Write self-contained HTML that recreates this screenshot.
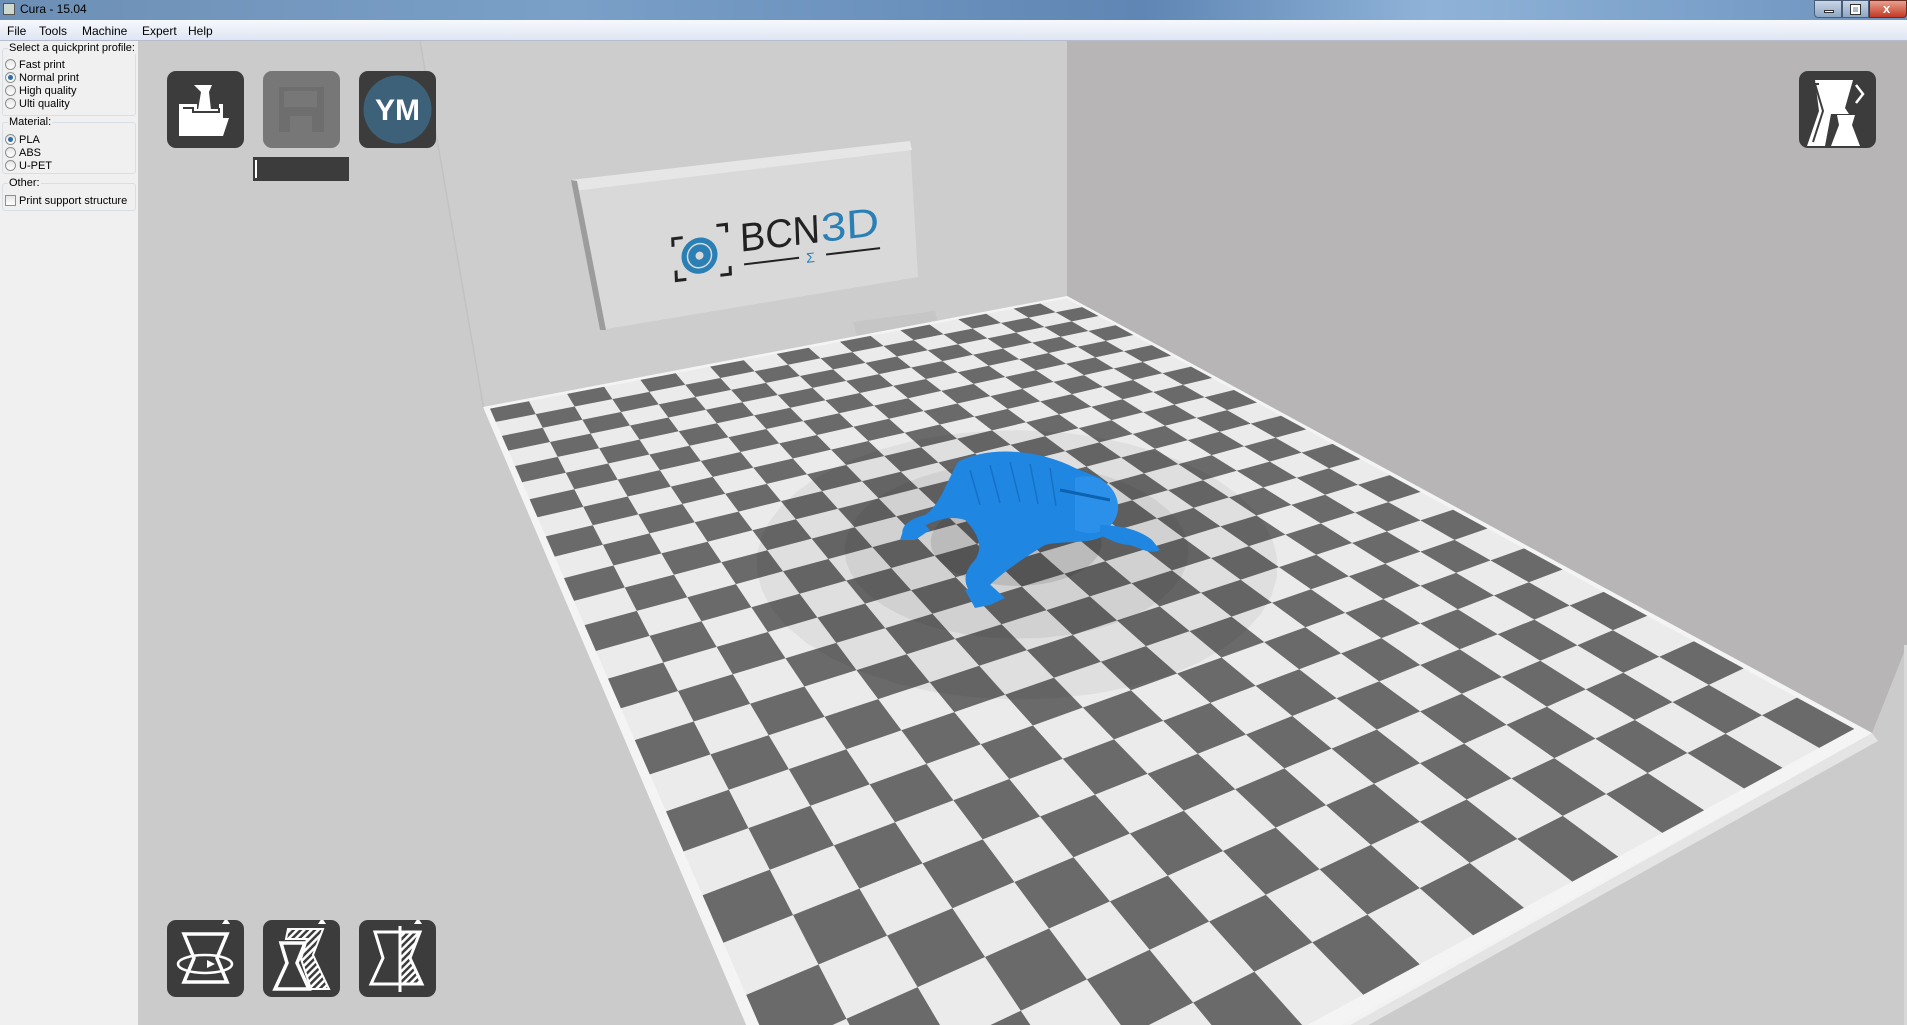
<!DOCTYPE html>
<html><head><meta charset="utf-8">
<style>
*{margin:0;padding:0;box-sizing:border-box}
html,body{width:1907px;height:1025px;overflow:hidden}
body{font-family:"Liberation Sans",sans-serif;font-size:11px;color:#000;background:#f0f0f0;position:relative}
#title{position:absolute;left:0;top:0;width:1907px;height:20px;background:linear-gradient(90deg,#6d8fb5 0%,#7aa0c8 30%,#5f86b4 60%,#8fb3d8 75%,#6d93bf 100%);overflow:hidden}
#title span{position:absolute;left:20px;top:2px;font-size:12px;color:#000}
#menu{position:absolute;left:0;top:20px;width:1907px;height:21px;background:linear-gradient(#f6f8fc,#dfe6f3);border-bottom:1px solid #b6bccc}
#menu span{position:absolute;top:4px;font-size:12px}
#panel{position:absolute;left:0;top:41px;width:138px;height:984px;background:#f0f0f0}
.grp{position:absolute;left:2px;width:134px;border:1px solid #d5dfe5;border-radius:3px}
.lbl{position:absolute;left:8px;font-size:11px;background:#f0f0f0;padding:0 1px}
.opt{position:absolute;left:5px;font-size:11px;line-height:12px}
.rad{display:inline-block;width:11px;height:11px;border:1px solid #8f8f8f;border-radius:50%;background:linear-gradient(#e6e6e6,#fff);vertical-align:-2px;margin-right:3px;position:relative}
.rad.on::after{content:"";position:absolute;left:2px;top:2px;width:5px;height:5px;border-radius:50%;background:#2c6ea8}
.chk{display:inline-block;width:11px;height:11px;border:1px solid #8f8f8f;background:linear-gradient(#e6e6e6,#fff);vertical-align:-2px;margin-right:3px}
#view{position:absolute;left:138px;top:41px;width:1769px;height:984px;overflow:hidden}
.btn{position:absolute;width:77px;height:77px;border-radius:9px;background:#3c3c3c}
</style></head><body>
<div id="title"><span style="left:3px;top:3px;width:12px;height:12px;background:#cfd8d0;border:1px solid #555"></span><span>Cura - 15.04</span>
<div style="position:absolute;left:1814px;top:0;width:28px;height:18px;border:1px solid #4a5d78;border-radius:0 0 0 4px;background:linear-gradient(#c9d6e6,#8ea6c4)"><div style="position:absolute;left:9px;top:9px;width:10px;height:3px;background:#fff;border:1px solid #333"></div></div>
<div style="position:absolute;left:1842px;top:0;width:27px;height:18px;border:1px solid #4a5d78;background:linear-gradient(#c9d6e6,#8ea6c4)"><div style="position:absolute;left:8px;top:4px;width:9px;height:9px;border:2px solid #fff;outline:1px solid #333"></div></div>
<div style="position:absolute;left:1869px;top:0;width:38px;height:18px;border:1px solid #6b2a20;border-radius:0 0 4px 0;background:linear-gradient(#e8a090,#c23a24)"><span style="left:13px;top:0;color:#fff;font-weight:bold;font-size:13px">x</span></div>
</div>
<div id="menu"><span style="left:7px">File</span><span style="left:39px">Tools</span><span style="left:82px">Machine</span><span style="left:142px">Expert</span><span style="left:188px">Help</span></div>
<div id="panel">
 <div class="grp" style="top:7px;height:68px"></div><div class="lbl" style="top:1px">Select a quickprint profile:</div>
 <div class="opt" style="top:18px"><span class="rad"></span>Fast print</div>
 <div class="opt" style="top:31px"><span class="rad on"></span>Normal print</div>
 <div class="opt" style="top:44px"><span class="rad"></span>High quality</div>
 <div class="opt" style="top:57px"><span class="rad"></span>Ulti quality</div>
 <div class="grp" style="top:81px;height:52px"></div><div class="lbl" style="top:75px">Material:</div>
 <div class="opt" style="top:93px"><span class="rad on"></span>PLA</div>
 <div class="opt" style="top:106px"><span class="rad"></span>ABS</div>
 <div class="opt" style="top:119px"><span class="rad"></span>U-PET</div>
 <div class="grp" style="top:142px;height:28px"></div><div class="lbl" style="top:136px">Other:</div>
 <div class="opt" style="top:154px"><span class="chk"></span>Print support structure</div>
</div>
<div id="view">
<svg id="scene" width="1769" height="984" viewBox="138 41 1769 984" style="position:absolute;left:0;top:0">
 <rect x="138" y="41" width="1769" height="984" fill="#cbcbcb"/>
 <polygon points="420,41 1067,41 1067,296 483,407" fill="#cdcdcd"/>
 <line x1="420" y1="41" x2="484" y2="410" stroke="#c2c2c2" stroke-width="1.5"/>
 <polygon points="1067,41 1907,41 1907,645 1872,733 1067,296" fill="#b7b5b5"/>
 <polygon points="1904,645 1907,645 1907,1025 1904,1025" fill="#d8d8d8"/>
 <!-- sign -->
 <polygon points="571,180 910,141 918,277 600,330" fill="#d9d9d9"/>
 <polygon points="571,180 910,141 912,150 574,191" fill="#e6e6e6"/>
 <polygon points="571,180 577,181 606,330 600,330" fill="#9c9c9c"/>
 <g transform="matrix(1,-0.12,0.04,1,0,0)">
  <g transform="translate(0,98)">
  <text x="727" y="241" font-family="Liberation Sans,sans-serif" font-size="40" fill="#222" textLength="80" lengthAdjust="spacingAndGlyphs">BCN</text>
  <text x="808" y="241" font-family="Liberation Sans,sans-serif" font-size="40" fill="#2a7fb5" textLength="58" lengthAdjust="spacingAndGlyphs">3D</text>
  <line x1="730" y1="254" x2="785" y2="254" stroke="#222" stroke-width="2"/>
  <line x1="812" y1="254" x2="866" y2="254" stroke="#222" stroke-width="2"/>
  <text x="792" y="260" font-size="14" fill="#2a7fb5" font-family="Liberation Sans,sans-serif">Σ</text>
  <circle cx="686" cy="240" r="18" fill="#2a7fb5"/><circle cx="686" cy="240" r="12" fill="none" stroke="#d9d9d9" stroke-width="1.5"/><circle cx="686" cy="240" r="4" fill="#d9d9d9"/>
  <path d="M660 228 v-8 h10 M714 220 v-8 h-10 M662 252 v10 h10 M716 254 v8 h-10" stroke="#222" stroke-width="3" fill="none"/>
  </g>
 </g>
 <polygon points="853,322 935,311 940,330 858,340" fill="#c6c6c6"/>
 <g id="plate"></g>
</svg>
<div class="btn" style="left:29px;top:30px"><svg width="77" height="77"><path d="M27 14h18l-3 7 2 18H31l3-18z" fill="#fff"/><path d="M12 33h18v5h22v-5h4v14h6l-6 18H12z" fill="#fff"/><path d="M16 37h10v4h26v-4" fill="none" stroke="#3c3c3c" stroke-width="2"/></svg></div>
<div class="btn" style="left:125px;top:30px;background:#777"><svg width="77" height="77"><rect x="16" y="16" width="45" height="45" fill="#6e6e6e"/><rect x="21" y="20" width="33" height="16" fill="#777"/><rect x="27" y="45" width="22" height="16" fill="#777"/></svg></div>
<div class="btn" style="left:221px;top:30px"><svg width="77" height="77"><circle cx="38.5" cy="38.5" r="34" fill="#3c6179"/><text x="38.5" y="49" text-anchor="middle" font-family="Liberation Sans,sans-serif" font-weight="bold" font-size="30" fill="#fff">YM</text></svg></div>
<div style="position:absolute;left:115px;top:116px;width:96px;height:24px;background:#3c3c3c"><div style="position:absolute;left:2px;top:3px;width:2px;height:18px;background:#fff"></div></div>
<div class="btn" style="left:1661px;top:30px"><svg width="77" height="77"><path d="M16 9h38l-8 28 4 6H32l-6 32H8l12-35z" fill="#fff"/><path d="M20 13l-4 0 8 27-10 31" stroke="#3c3c3c" stroke-width="2" fill="none"/><path d="M38 44h18l-3 10 8 21H32l8-21z" fill="#fff"/><path d="M57 14l7 9-7 9" stroke="#fff" stroke-width="2.5" fill="none"/></svg></div>
<div class="btn" style="left:29px;top:879px"><svg width="77" height="77"><path d="M55 4l8 0-4-6z" fill="#fff"/><path d="M17 14h43l-10 24 10 24H17l10-24z" fill="none" stroke="#fff" stroke-width="3.5"/><ellipse cx="38" cy="44" rx="27" ry="9" fill="none" stroke="#fff" stroke-width="2.5"/><path d="M40 48l8-4-8-4" fill="#fff"/></svg></div>
<div class="btn" style="left:125px;top:879px"><svg width="77" height="77"><path d="M55 4l8 0-4-6z" fill="#fff"/><defs><pattern id="h" width="5" height="5" patternUnits="userSpaceOnUse" patternTransform="rotate(45)"><rect width="2.5" height="5" fill="#fff"/></pattern></defs><path d="M25 9h35l-10 26 16 34H48l-10-30 6-20H23z" fill="url(#h)" stroke="#fff" stroke-width="2"/><path d="M18 23h24l-8 20 12 26H12l12-26z" fill="#3c3c3c" stroke="#fff" stroke-width="3.5"/></svg></div>
<div class="btn" style="left:221px;top:879px"><svg width="77" height="77"><path d="M55 4l8 0-4-6z" fill="#fff"/><path d="M41 12h20l-10 26 12 26H41z" fill="url(#h)"/><path d="M16 12h45l-10 26 12 26H12l12-26z" fill="none" stroke="#fff" stroke-width="3"/><line x1="41" y1="6" x2="41" y2="72" stroke="#fff" stroke-width="3"/></svg></div>
</div>
<script>
(function(){
var NS="http://www.w3.org/2000/svg",g=document.getElementById("plate");
function H(P){var x0=P[0][0],y0=P[0][1],x1=P[1][0],y1=P[1][1],x2=P[2][0],y2=P[2][1],x3=P[3][0],y3=P[3][1];
var dx1=x1-x2,dx2=x3-x2,dx3=x0-x1+x2-x3,dy1=y1-y2,dy2=y3-y2,dy3=y0-y1+y2-y3;
var den=dx1*dy2-dx2*dy1,gg=(dx3*dy2-dx2*dy3)/den,h=(dx1*dy3-dx3*dy1)/den;
var a=x1-x0+gg*x1,b=x3-x0+h*x3,c=x0,d=y1-y0+gg*y1,e=y3-y0+h*y3,f=y0;
return function(u,v){var w=gg*u+h*v+1;return [(a*u+b*v+c)/w,(d*u+e*v+f)/w];};}
function poly(pts,fill,op){var p=document.createElementNS(NS,"polygon");p.setAttribute("points",pts.map(function(q){return q[0].toFixed(1)+","+q[1].toFixed(1)}).join(" "));p.setAttribute("fill",fill);if(op)p.setAttribute("fill-opacity",op);g.appendChild(p);}
var Q=[[483,407],[1067,296],[1872,733],[859,1290]];
var T=H(Q);
poly([[1067,296],[1872,733],[1872,743],[859,1300],[859,1290]],"#f2f2f2");
poly([[1872,733],[1878,741],[866,1305],[859,1300]],"#e4e4e4");
poly(Q,"#f4f4f4");
var nu=18,nv=26,m=0.008;
var I=H([T(m,m),T(1-m,m),T(1-m,1-m),T(m,1-m)]);
poly([I(0,0),I(1,0),I(1,1),I(0,1)],"#ebebeb");
for(var i=0;i<nu;i++)for(var j=0;j<nv;j++){if((i+j)%2)continue;
poly([I(i/nu,j/nv),I((i+1)/nu,j/nv),I((i+1)/nu,(j+1)/nv),I(i/nu,(j+1)/nv)],"#6a6a6a");}
var best=[0,0],bd=1e9;for(var u=0;u<=1;u+=0.01)for(var v=0;v<=1;v+=0.01){var p=T(u,v),dd=(p[0]-1020)*(p[0]-1020)+(p[1]-540)*(p[1]-540);if(dd<bd){bd=dd;best=[u,v];}}
function circ(r,op){var pts=[];for(var k=0;k<48;k++){var a=k/48*Math.PI*2;pts.push(T(best[0]+r*Math.cos(a),best[1]+r*0.72*Math.sin(a)));}poly(pts,"#000",op);}
circ(0.3,0.05);circ(0.2,0.06);circ(0.1,0.1);
var fr=document.createElementNS(NS,"g");fr.setAttribute("fill","#1f86e2");
fr.innerHTML='<path d="M958 462 C990 445 1040 450 1075 468 L1100 478 C1115 490 1118 520 1105 535 C1090 545 1065 540 1045 545 C1020 560 1000 575 990 585 L975 595 C965 590 960 575 975 560 C985 545 975 530 965 520 C950 515 935 520 920 528 L905 540 C898 530 905 520 925 515 C940 505 945 485 958 462Z"/>'+
'<path d="M1075 478 C1100 470 1120 490 1118 510 C1115 530 1095 538 1075 530 Z" fill="#2b90ea"/>'+
'<path d="M1100 525 C1120 525 1140 530 1152 540 L1160 550 C1150 555 1140 548 1130 545 C1120 545 1110 540 1100 535Z"/>'+
'<path d="M905 525 L920 520 930 530 915 540 900 540Z"/><path d="M965 590 L985 580 1005 598 990 605 975 608Z"/>'+
'<path d="M1060 490 L1110 500" stroke="#0d62b0" stroke-width="3"/>'+
'<g stroke="#1670c8" stroke-width="1.5" fill="none"><path d="M970 470 l10 35 M990 465 l10 38 M1010 462 l10 40 M1030 464 l8 40 M1050 468 l6 38"/></g>';
g.appendChild(fr);
})();
</script>
</body></html>
